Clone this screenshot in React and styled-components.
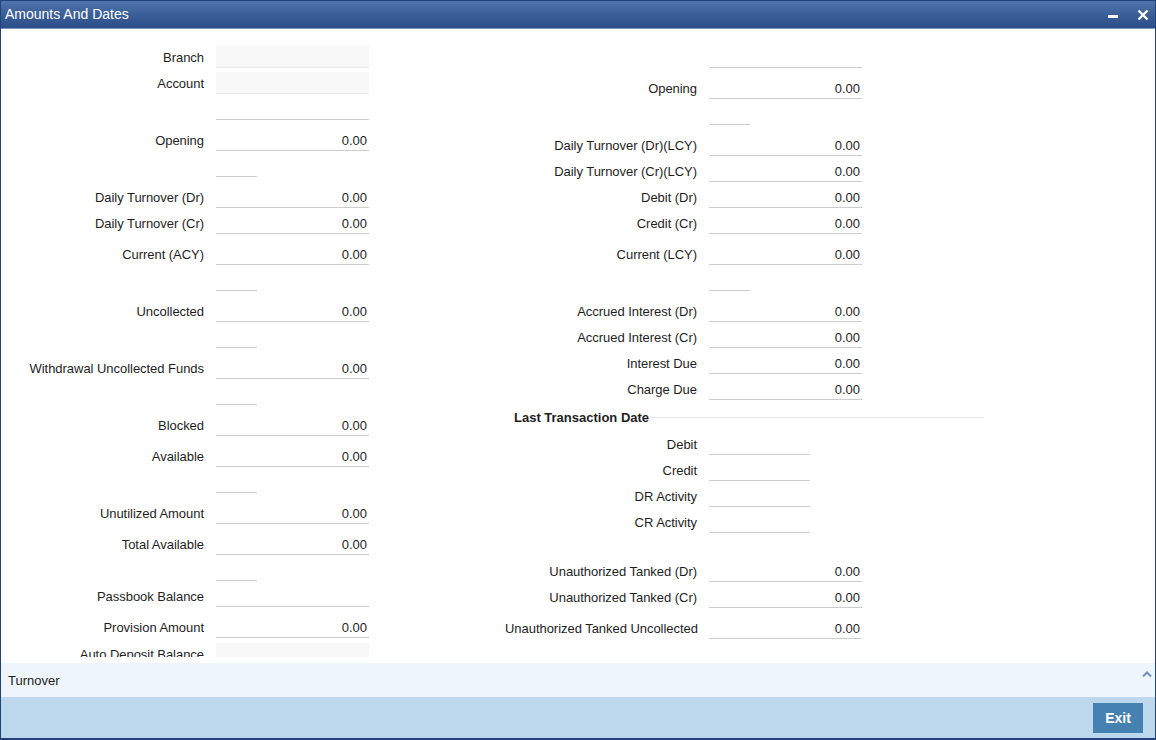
import React from 'react';
import styled, { createGlobalStyle } from 'styled-components';

const GlobalStyle = createGlobalStyle`
    html, body {
        margin: 0;
        padding: 0;
        background: #ffffff;
    }
    body {
        font-family: "Liberation Sans", Arial, sans-serif;
        font-size: 13px;
        color: #1e1e1e;
    }
    * {
        box-sizing: border-box;
    }
`;

const Window = styled.div`
    width: 1156px;
    height: 740px;
    display: flex;
    flex-direction: column;
    border: 1px solid #22437a;
    border-bottom-width: 2px;
    background: #ffffff;
    overflow: hidden;
`;

const TitleBar = styled.div`
    height: 29px;
    flex: none;
    display: flex;
    align-items: center;
    justify-content: space-between;
    padding: 0 7px 1px 5px;
    margin: -1px -1px 0;
    background: linear-gradient(to bottom, #5176ad 0%, #3d6199 45%, #2b4e8a 100%);
    border-bottom: 1px solid #7d98be;
    color: #ffffff;
    font-size: 14px;
`;

const WindowControls = styled.div`
    display: flex;
    align-items: center;
    gap: 18px;
    padding-top: 2px;
`;

const ScrollArea = styled.div`
    height: 628px;
    flex: none;
    overflow: hidden;
    padding-top: 17px;
`;

const Columns = styled.div`
    display: flex;
    align-items: flex-start;
    gap: 136px;
`;

const Column = styled.div`
    display: flex;
    flex-direction: column;
    width: ${(p) => p.$width}px;
`;

const Row = styled.div`
    display: flex;
    align-items: center;
    gap: 12px;
    height: 22px;
    margin-top: ${(p) => p.$mt}px;
`;

const Label = styled.div`
    width: ${(p) => p.$width}px;
    flex: none;
    text-align: right;
    white-space: nowrap;
    letter-spacing: -0.04px;
    padding-top: 1px;
`;

const Input = styled.div`
    width: ${(p) => p.$width}px;
    height: 22px;
    flex: none;
    text-align: right;
    line-height: 23px;
    padding-right: 2px;
    background: ${(p) => (p.$readonly ? '#f8f8f8' : 'transparent')};
    border-bottom: 1px solid ${(p) => (p.$readonly ? '#ececec' : '#cdcdcd')};
`;

const SectionHeader = styled.div`
    display: flex;
    align-items: center;
    height: 22px;
    margin-top: ${(p) => p.$mt}px;
    padding-left: 9px;
    font-weight: bold;

    &::after {
        content: '';
        flex: 1;
        height: 1px;
        margin-left: 1px;
        background: #e8e8e8;
    }
`;

const Spacer = styled.div`
    height: 6px;
    flex: none;
`;

const TurnoverBar = styled.div`
    height: 34px;
    flex: none;
    display: flex;
    align-items: center;
    justify-content: space-between;
    padding: 0 3px 0 7px;
    background: #eef5fd;
    font-size: 13px;

    svg {
        align-self: flex-start;
        margin-top: 8px;
    }
`;

const Footer = styled.div`
    flex: 1;
    display: flex;
    align-items: flex-start;
    justify-content: flex-end;
    padding: 6px 12px 0 0;
    background: #bdd8ec;
`;

const ExitButton = styled.button`
    width: 50px;
    height: 30px;
    border: none;
    background: #4682b1;
    color: #ffffff;
    font-family: "Liberation Sans", Arial, sans-serif;
    font-size: 14px;
    font-weight: bold;
    cursor: pointer;
`;

const leftFields = [
    { label: 'Branch', mt: 0, readonly: true },
    { label: 'Account', mt: 4, readonly: true },
    { label: '', mt: 4 },
    { label: 'Opening', value: '0.00', mt: 9 },
    { short: true, mt: 4 },
    { label: 'Daily Turnover (Dr)', value: '0.00', mt: 9 },
    { label: 'Daily Turnover (Cr)', value: '0.00', mt: 4 },
    { label: 'Current (ACY)', value: '0.00', mt: 9 },
    { short: true, mt: 4 },
    { label: 'Uncollected', value: '0.00', mt: 9 },
    { short: true, mt: 4 },
    { label: 'Withdrawal Uncollected Funds', value: '0.00', mt: 9 },
    { short: true, mt: 4 },
    { label: 'Blocked', value: '0.00', mt: 9 },
    { label: 'Available', value: '0.00', mt: 9 },
    { short: true, mt: 4 },
    { label: 'Unutilized Amount', value: '0.00', mt: 9 },
    { label: 'Total Available', value: '0.00', mt: 9 },
    { short: true, mt: 4 },
    { label: 'Passbook Balance', mt: 4 },
    { label: 'Provision Amount', value: '0.00', mt: 9 },
    { label: 'Auto Deposit Balance', mt: 5, readonly: true },
];

const rightFields = [
    { label: '', mt: 0 },
    { label: 'Opening', value: '0.00', mt: 9 },
    { short: true, mt: 4 },
    { label: 'Daily Turnover (Dr)(LCY)', value: '0.00', mt: 9 },
    { label: 'Daily Turnover (Cr)(LCY)', value: '0.00', mt: 4 },
    { label: 'Debit (Dr)', value: '0.00', mt: 4 },
    { label: 'Credit (Cr)', value: '0.00', mt: 4 },
    { label: 'Current (LCY)', value: '0.00', mt: 9 },
    { short: true, mt: 4 },
    { label: 'Accrued Interest (Dr)', value: '0.00', mt: 9 },
    { label: 'Accrued Interest (Cr)', value: '0.00', mt: 4 },
    { label: 'Interest Due', value: '0.00', mt: 4 },
    { label: 'Charge Due', value: '0.00', mt: 4 },
    { header: 'Last Transaction Date', mt: 6 },
    { label: 'Debit', mt: 5, date: true },
    { label: 'Credit', mt: 4, date: true },
    { label: 'DR Activity', mt: 4, date: true },
    { label: 'CR Activity', mt: 4, date: true },
    { label: 'Unauthorized Tanked (Dr)', value: '0.00', mt: 27 },
    { label: 'Unauthorized Tanked (Cr)', value: '0.00', mt: 4 },
    { label: 'Unauthorized Tanked Uncollected', value: '0.00', mt: 9 },
];

function FieldList({ fields, labelWidth }) {
    return fields.map((f, i) => {
        if (f.header) {
            return (
                <SectionHeader key={i} $mt={f.mt}>
                    {f.header}
                </SectionHeader>
            );
        }
        const width = f.short ? 41 : f.date ? 101 : 153;
        return (
            <Row key={i} $mt={f.mt}>
                <Label $width={labelWidth}>{f.label}</Label>
                <Input $width={width} $readonly={f.readonly}>
                    {f.value}
                </Input>
            </Row>
        );
    });
}

export default function App() {
    return (
        <>
            <GlobalStyle />
            <Window>
                <TitleBar>
                    <span>Amounts And Dates</span>
                    <WindowControls>
                        <svg width="11" height="11" viewBox="0 0 11 11">
                            <rect x="0" y="6" width="10" height="3" fill="#ffffff" />
                        </svg>
                        <svg width="12" height="12" viewBox="0 0 12 12">
                            <path d="M1.5 1.5 L10.5 10.5 M10.5 1.5 L1.5 10.5" stroke="#ffffff" strokeWidth="2.4" />
                        </svg>
                    </WindowControls>
                </TitleBar>
                <ScrollArea>
                    <Columns>
                        <Column $width={368}>
                            <FieldList fields={leftFields} labelWidth={203} />
                        </Column>
                        <Column $width={479}>
                            <FieldList fields={rightFields} labelWidth={192} />
                        </Column>
                    </Columns>
                </ScrollArea>
                <Spacer />
                <TurnoverBar>
                    <span>Turnover</span>
                    <svg width="10" height="7" viewBox="0 0 10 7">
                        <path d="M1 5.5 L5 1.5 L9 5.5" fill="none" stroke="#6f90be" strokeWidth="2" />
                    </svg>
                </TurnoverBar>
                <Footer>
                    <ExitButton>Exit</ExitButton>
                </Footer>
            </Window>
        </>
    );
}
